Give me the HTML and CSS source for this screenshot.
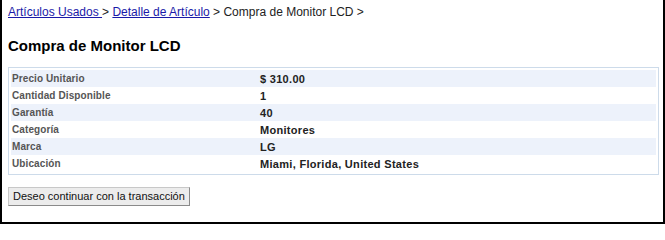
FILE: index.html
```html
<!DOCTYPE html>
<html lang="es">
<head>
<meta charset="utf-8">
<title>Compra de Monitor LCD</title>
<link rel="stylesheet" href="styles.css">
</head>
<body>
<div class="frame">
  <div class="breadcrumb">
    <a href="#">Artículos Usados </a> &gt; <a href="#">Detalle de Artículo</a> &gt; Compra de Monitor LCD &gt;
  </div>
  <h1 class="title">Compra de Monitor LCD</h1>
  <div class="details">
    <div class="row odd"><span class="label">Precio Unitario</span><span class="value">$ 310.00</span></div>
    <div class="row"><span class="label">Cantidad Disponible</span><span class="value">1</span></div>
    <div class="row odd"><span class="label">Garantía</span><span class="value">40</span></div>
    <div class="row"><span class="label">Categoría</span><span class="value">Monitores</span></div>
    <div class="row odd"><span class="label">Marca</span><span class="value">LG</span></div>
    <div class="row"><span class="label">Ubicación</span><span class="value">Miami, Florida, United States</span></div>
  </div>
  <div class="actions">
    <button class="btn" type="button">Deseo continuar con la transacción</button>
  </div>
</div>
</body>
</html>
```
FILE: styles.css
```css
html, body {
  margin: 0;
  padding: 0;
  background: #ffffff;
}
body {
  width: 665px;
  height: 224px;
  overflow: hidden;
}
.frame {
  box-sizing: border-box;
  width: 665px;
  height: 224px;
  border-left: 2px solid #000;
  border-right: 2px solid #000;
  border-bottom: 2px solid #000;
  padding: 4px 5px 0 6px;
  font-family: "Liberation Sans", Arial, sans-serif;
  color: #000;
}
.breadcrumb {
  font-size: 12px;
  line-height: 17px;
  height: 17px;
  color: #222;
}
.breadcrumb a {
  color: #1a1aa8;
  text-decoration: underline;
}
.title {
  margin: 15px 0 0 0;
  font-size: 15px;
  line-height: 19px;
  font-weight: bold;
  color: #000;
}
.details {
  margin-top: 12px;
  width: 651px;
  box-sizing: border-box;
  border: 1px solid #cddbea;
  padding: 2px;
  display: flex;
  flex-direction: column;
}
.row {
  display: flex;
  height: 17px;
  align-items: center;
  background: #ffffff;
}
.row.odd {
  background: #edf2fb;
}
.label {
  width: 248px;
  padding-left: 1px;
  font-size: 10px;
  font-weight: bold;
  letter-spacing: 0.1px;
  color: #555;
}
.value {
  font-size: 11px;
  font-weight: bold;
  letter-spacing: 0.3px;
  color: #222;
}
.actions {
  margin-top: 11px;
}
.btn {
  font-family: "Liberation Sans", Arial, sans-serif;
  font-size: 11px;
  height: 19px;
  padding: 0 4px;
  background: #ececec;
  border: 1px solid #c8c8c8;
  border-right-color: #8a8a8a;
  border-bottom-color: #8a8a8a;
  border-radius: 0;
  color: #111;
  line-height: 17px;
}
```
